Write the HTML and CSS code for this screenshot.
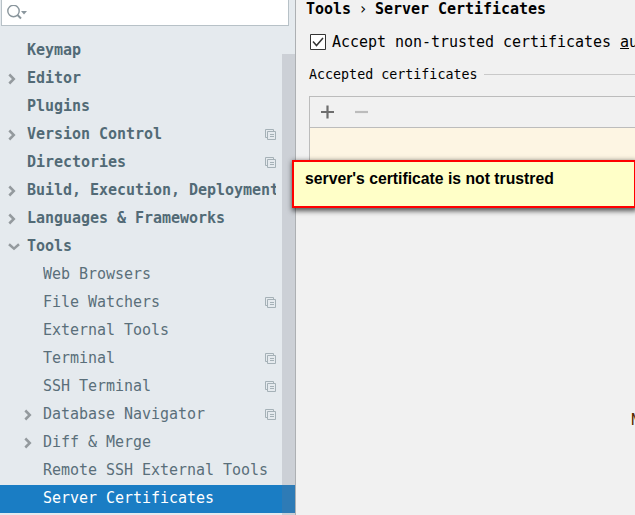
FILE: index.html
```html
<!DOCTYPE html>
<html lang="en">
<head>
<meta charset="utf-8">
<title>Settings</title>
<link rel="stylesheet" href="styles.css">
</head>
<body>
<svg class="defs" width="0" height="0">
  <symbol id="right" viewBox="0 0 8 12"><path d="M1.3 1.5 5.8 6 1.3 10.5" fill="none" stroke="#949a9e" stroke-width="2.5"/></symbol>
  <symbol id="down" viewBox="0 0 12 8"><path d="M1 1.3 6 5.7 11 1.3" fill="none" stroke="#949a9e" stroke-width="2.5"/></symbol>
  <symbol id="copy" viewBox="0 0 11 11"><path d="M2 8.5H.5V.5H8.5V2M2.5 2.5H10.5V10.5H2.5ZM5 5.5H9M5 7.5H9" fill="none" stroke="#a5b1b7"/></symbol>
</svg>
<div class="window">
  <aside class="sidebar">
    <div class="search">
      <svg width="22" height="16" viewBox="0 0 22 16"><circle cx="6.5" cy="6" r="5.7" fill="none" stroke="#8a969d" stroke-width="1.4"/><path d="M10.5 10 14 13.5" stroke="#8a969d" stroke-width="2"/><path d="M14 6H20L17 9.5Z" fill="#8a969d"/></svg>
    </div>
    <nav class="tree">
      <div class="row top"><span class="label">Keymap</span></div>
      <div class="row top"><svg class="arrow"><use href="#right"/></svg><span class="label">Editor</span></div>
      <div class="row top"><span class="label">Plugins</span></div>
      <div class="row top"><svg class="arrow"><use href="#right"/></svg><span class="label">Version Control</span><svg class="copy"><use href="#copy"/></svg></div>
      <div class="row top"><span class="label">Directories</span><svg class="copy"><use href="#copy"/></svg></div>
      <div class="row top"><svg class="arrow"><use href="#right"/></svg><span class="label">Build, Execution, Deployment</span></div>
      <div class="row top"><svg class="arrow"><use href="#right"/></svg><span class="label">Languages &amp; Frameworks</span></div>
      <div class="row top"><svg class="arrow open"><use href="#down"/></svg><span class="label">Tools</span></div>
      <div class="row"><span class="label">Web Browsers</span></div>
      <div class="row"><span class="label">File Watchers</span><svg class="copy"><use href="#copy"/></svg></div>
      <div class="row"><span class="label">External Tools</span></div>
      <div class="row"><span class="label">Terminal</span><svg class="copy"><use href="#copy"/></svg></div>
      <div class="row"><span class="label">SSH Terminal</span><svg class="copy"><use href="#copy"/></svg></div>
      <div class="row"><svg class="arrow"><use href="#right"/></svg><span class="label">Database Navigator</span><svg class="copy"><use href="#copy"/></svg></div>
      <div class="row"><svg class="arrow"><use href="#right"/></svg><span class="label">Diff &amp; Merge</span></div>
      <div class="row"><span class="label">Remote SSH External Tools</span></div>
      <div class="row selected"><span class="label">Server Certificates</span></div>
    </nav>
    <div class="scrollbar"></div>
  </aside>
  <main class="content">
    <h1 class="crumbs"><span>Tools</span><span class="sep">›</span><span>Server Certificates</span></h1>
    <div class="option">
      <svg class="check" width="16" height="16" viewBox="0 0 16 16"><path d="M.5.5H15.5V15.5H.5Z" fill="#fff" stroke="#333"/><path d="M3 7.5 6.5 11.5 13 4" fill="none" stroke="#333" stroke-width="1.5"/></svg>
      <span>Accept non-trusted certificates <u>a</u>u</span>
    </div>
    <div class="group"><span class="title">Accepted certificates</span><i class="rule"></i></div>
    <section class="list">
      <div class="toolbar">
        <svg width="50" height="14" viewBox="0 0 50 14"><path d="M0 7H13M6.5.5V13.5" stroke="#6e6e6e" stroke-width="2.2"/><path d="M34 7H47" stroke="#bcbcbc" stroke-width="2.2"/></svg>
      </div>
      <div class="banner"></div>
    </section>
    <div class="empty">N</div>
  </main>
  <div class="note">server's certificate is not trustred</div>
</div>
</body>
</html>
```
FILE: styles.css
```css
* { box-sizing: border-box; }
body {
  margin: 0;
  overflow: hidden;
  font: 15px/28px "DejaVu Sans Mono", monospace;
  letter-spacing: -0.03px;
  color: #000;
}
.defs { position: absolute; }
.window {
  position: relative;
  display: flex;
  width: 635px;
  height: 515px;
  overflow: hidden;
  background: #f1f1f1;
}
.sidebar {
  position: relative;
  flex: none;
  width: 296px;
  height: 515px;
  background: #e5eaee;
  border-right: 1px solid #adb0b3;
  overflow: hidden;
}
.search {
  width: 288px;
  height: 26px;
  margin-left: 1px;
  padding: 5px 0 0 5px;
  background: #fff;
  border: 1px solid #b7c1c7;
  border-top: 0;
  line-height: 0;
}
.tree { margin-top: 11px; }
.row {
  display: flex;
  align-items: center;
  height: 28px;
  padding: 0 19px 0 43px;
  color: #5a6f7a;
  white-space: pre;
}
.top { padding-left: 27px; font-weight: bold; color: #526a76; }
.label { flex: 1; min-width: 0; height: 28px; line-height: 26px; overflow: hidden; }
.arrow { flex: none; width: 8px; height: 12px; margin: 0 11px 1px -19px; }
.open { width: 12px; height: 8px; margin: 0 7px 0 -19px; }
.copy { flex: none; width: 11px; height: 11px; margin-bottom: 1px; }
.selected { background: #1a7dc4; color: #fff; }
.scrollbar {
  position: absolute;
  top: 54px;
  right: 0;
  bottom: 0;
  width: 13px;
  background: rgba(120, 120, 130, 0.22);
}
.content { flex: 1; min-width: 0; overflow: hidden; padding-left: 10px; white-space: nowrap; }
.crumbs { display: flex; margin: 0; height: 18px; font-size: 15px; line-height: 18px; }
.sep { width: 24px; text-align: center; font-weight: normal; }
.option { display: flex; align-items: center; height: 20px; margin: 14px 0 0 4px; line-height: 20px; }
.check { flex: none; margin: 0 6px 0 0; }
.group {
  display: flex;
  align-items: center;
  height: 20px;
  margin: 12px 0 0 3px;
  font-size: 13.33px;
  letter-spacing: 0;
  line-height: 20px;
}
.title { padding-top: 2px; }
.rule { flex: 1; height: 1px; margin-left: 6px; background: #c9c9c9; }
.list { height: 66px; margin: 12px 0 0 3px; border: 1px solid #bcbcbc; border-width: 1px 0 0 1px; }
.toolbar { height: 31px; padding: 8px 0 0 10.5px; line-height: 0; border-bottom: 1px solid #bcbcbc; }
.banner { height: 34px; background: #fdf5e3; }
.empty { margin: 244px 0 0 325px; line-height: 28px; color: #5a2a00; }
.note {
  position: absolute;
  left: 292px;
  top: 160px;
  width: 343px;
  height: 48px;
  padding: 0 0 0 11px;
  border: 2px solid #f00;
  border-right-width: 1px;
  background: #ffffc8;
  box-shadow: 1px 2px 5px 1px rgba(0, 0, 0, 0.65);
  font: 600 15.75px/33px "Liberation Sans", Arial, sans-serif;
  letter-spacing: 0;
}
```
